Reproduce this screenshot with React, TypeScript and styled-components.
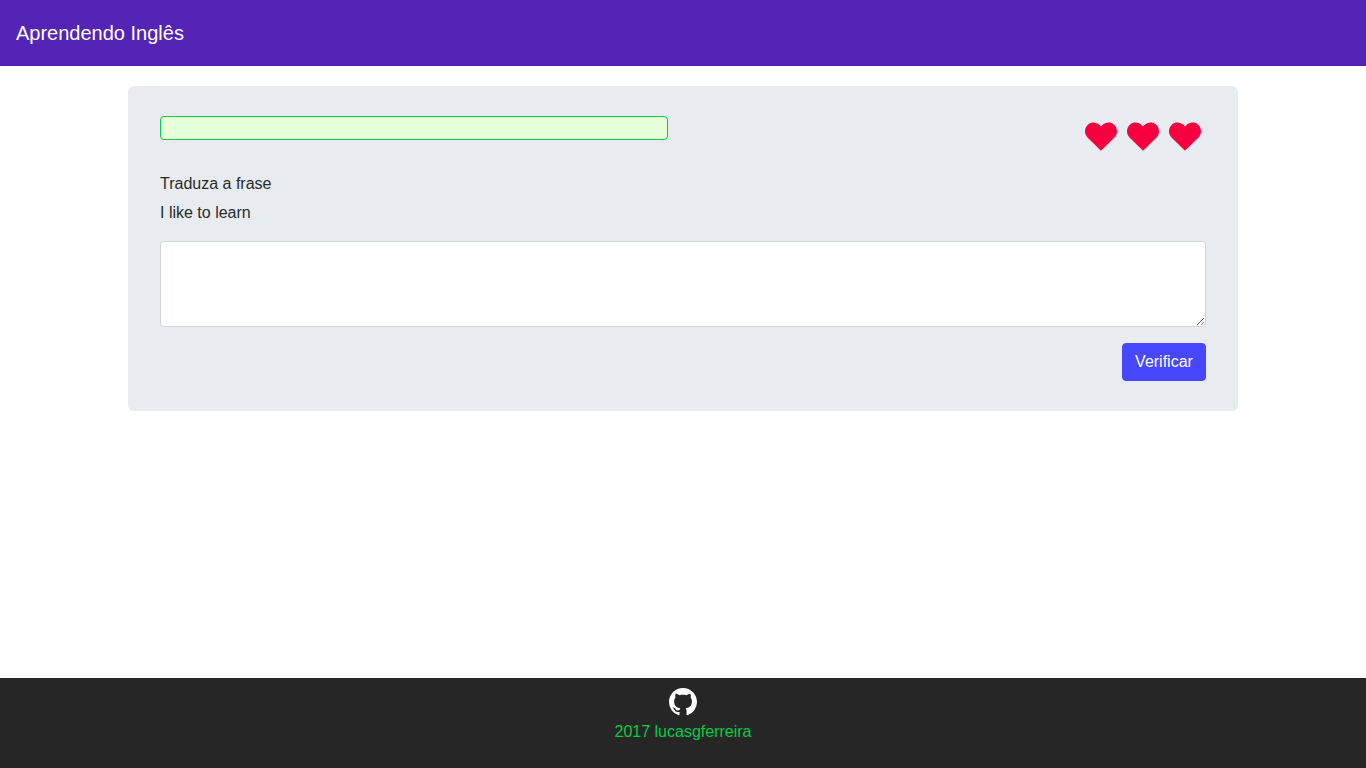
import React from "react";
import styled, { createGlobalStyle } from "styled-components";

const GlobalStyle = createGlobalStyle`
  * {
    box-sizing: border-box;
  }
  body {
    margin: 0;
    background: #fff;
    color: #292b2c;
    font-family: "Liberation Sans", Arial, sans-serif;
    font-size: 16px;
    line-height: 1.5;
  }
`;

const LIVES = [1, 2, 3];

const HeartIcon = () => (
  <svg width={32} height={32} viewBox="0 8 512 512" fill="#f70040">
    <path d="M462.3 62.6C407.5 15.9 326 24.3 275.7 76.2L256 96.5l-19.7-20.3C186.1 24.3 104.5 15.9 49.7 62.6c-62.8 53.6-66.1 149.8-9.9 207.9L256 484l216.1-213.5c56.3-58.1 53-154.3-9.8-207.9z" />
  </svg>
);

const GithubIcon = () => (
  <svg width={28} height={28} viewBox="0 0 16 16" fill="#fff">
    <path d="M8 0c4.42 0 8 3.58 8 8a8.013 8.013 0 0 1-5.45 7.59c-.4.08-.55-.17-.55-.38 0-.27.01-1.13.01-2.2 0-.75-.25-1.23-.54-1.48 1.78-.2 3.65-.88 3.65-3.95 0-.88-.31-1.59-.82-2.15.08-.2.36-1.02-.08-2.12 0 0-.67-.22-2.2.82-.64-.18-1.32-.27-2-.27-.68 0-1.36.09-2 .27-1.53-1.03-2.2-.82-2.2-.82-.44 1.1-.16 1.92-.08 2.12-.51.56-.82 1.28-.82 2.15 0 3.06 1.86 3.75 3.64 3.95-.23.2-.44.55-.51 1.07-.46.21-1.61.55-2.33-.66-.15-.24-.6-.83-1.23-.82-.67.01-.27.38.01.53.34.19.73.9.82 1.13.16.45.68 1.31 2.69.94 0 .67.01 1.3.01 1.49 0 .21-.15.45-.55.38A7.995 7.995 0 0 1 0 8c0-4.42 3.58-8 8-8Z" />
  </svg>
);

export default function App() {
  return (
    <Page>
      <GlobalStyle />
      <Header>Aprendendo Inglês</Header>
      <Main>
        <Card>
          <TopRow>
            <ProgressBar />
            <Lives>
              {LIVES.map((life) => (
                <HeartIcon key={life} />
              ))}
            </Lives>
          </TopRow>
          <Prompt>Traduza a frase</Prompt>
          <Prompt>I like to learn</Prompt>
          <Answer />
          <Actions>
            <VerifyButton>Verificar</VerifyButton>
          </Actions>
        </Card>
      </Main>
      <Footer>
        <GithubLink>
          <GithubIcon />
        </GithubLink>
        <Credit>2017 lucasgferreira</Credit>
      </Footer>
    </Page>
  );
}

const Page = styled.div`
  display: flex;
  flex-direction: column;
  min-height: 100vh;
`;

const Header = styled.header`
  align-items: center;
  background-color: #5523b5;
  color: #fff;
  display: flex;
  font-size: 20px;
  height: 66px;
  padding: 0 16px;
`;

const Main = styled.main`
  display: flex;
  flex: 1;
  justify-content: center;
  padding-top: 20px;
`;

const Card = styled.section`
  align-self: flex-start;
  background-color: #e8ebf0;
  border-radius: 6px;
  padding: 30px 32px;
  width: 1110px;
`;

const TopRow = styled.div`
  align-items: flex-start;
  display: flex;
  height: 56px;
  justify-content: space-between;
`;

const ProgressBar = styled.div`
  background-color: #e6ffd9;
  border: 1px solid #00cc44;
  border-radius: 4px;
  height: 24px;
  width: 508px;
`;

const Lives = styled.div`
  display: flex;
  gap: 10px;
  padding: 5px 5px 0 0;
`;

const Prompt = styled.p`
  margin: 0 0 5px;
`;

const Answer = styled.textarea`
  background: #fff;
  border: 1px solid #ced4da;
  border-radius: 4px;
  display: block;
  height: 86px;
  margin: 16px 0;
  width: 100%;
`;

const Actions = styled.div`
  display: flex;
  justify-content: flex-end;
`;

const VerifyButton = styled.button`
  background-color: #4747ff;
  border: 1px solid #4747ff;
  border-radius: 4px;
  color: #fff;
  font-family: inherit;
  font-size: 16px;
  height: 38px;
  line-height: 1.5;
  padding: 0 12px;
  width: 84px;
`;

const Footer = styled.footer`
  align-items: center;
  background-color: #262626;
  display: flex;
  flex-direction: column;
  height: 90px;
  padding-top: 10px;
`;

const GithubLink = styled.a`
  display: flex;
  height: 28px;
  margin-bottom: 4px;
`;

const Credit = styled.span`
  color: #00cc44;
`;
